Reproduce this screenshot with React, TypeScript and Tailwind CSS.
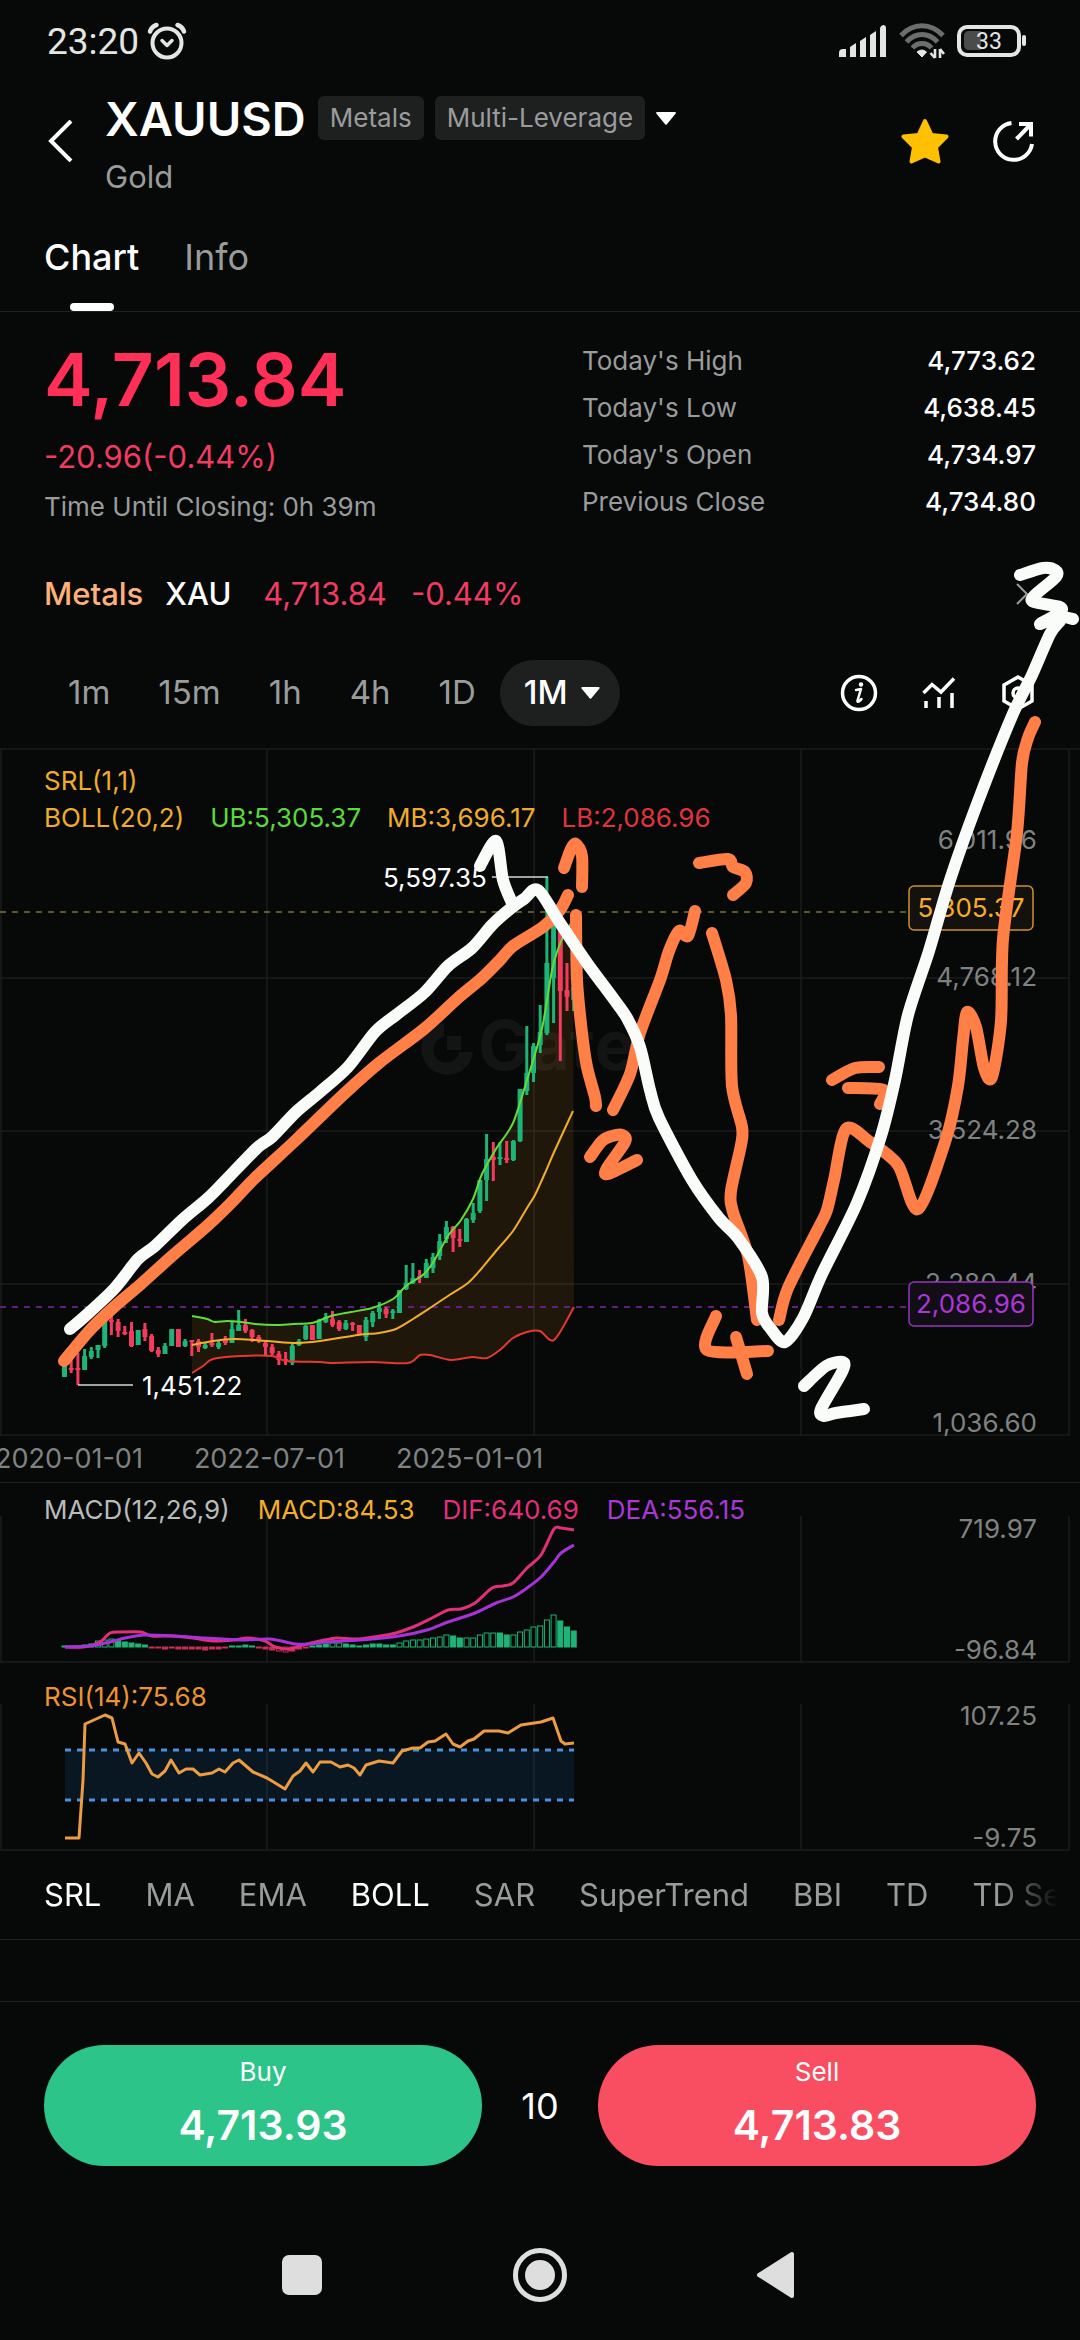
import type { ReactNode } from "react";
import clsx from "clsx";

const stats = [
  { label: "Today's High", value: "4,773.62" },
  { label: "Today's Low", value: "4,638.45" },
  { label: "Today's Open", value: "4,734.97" },
  { label: "Previous Close", value: "4,734.80" },
];

const timeframes = ["1m", "15m", "1h", "4h", "1D"];
const indicators = ["SRL", "MA", "EMA", "BOLL", "SAR", "SuperTrend", "BBI", "TD", "TD Sequential"];
const activeIndicators = ["SRL", "BOLL"];

const GREEN = "#1fb477";
const RED = "#f23b5d";
const FIRST_X = 64;
const STEP = 6.7;

// [up, high, bodyTop, bodyBottom, low] in chart units, one per month
const candles: [number, number, number, number, number][] = [
  [1, 1362, 1366, 1377, 1377], [0, 1357, 1368, 1370, 1373], [0, 1353, 1368, 1370, 1385], [1, 1349, 1356, 1370, 1370],
  [1, 1347, 1351, 1357, 1359], [1, 1345, 1345, 1350, 1358], [1, 1321, 1321, 1346, 1348], [0, 1313, 1320, 1322, 1335],
  [0, 1319, 1322, 1331, 1337], [0, 1326, 1332, 1334, 1335], [0, 1322, 1331, 1346, 1347], [1, 1330, 1330, 1345, 1345],
  [0, 1323, 1329, 1337, 1341], [0, 1334, 1336, 1351, 1352], [0, 1347, 1350, 1354, 1357], [1, 1343, 1346, 1354, 1354],
  [1, 1329, 1329, 1346, 1346], [0, 1329, 1329, 1347, 1347], [1, 1339, 1341, 1346, 1347], [0, 1340, 1340, 1342, 1356],
  [0, 1339, 1341, 1347, 1352], [1, 1342, 1345, 1348, 1349], [0, 1333, 1343, 1345, 1347], [1, 1341, 1343, 1347, 1349],
  [0, 1336, 1339, 1343, 1345], [1, 1321, 1329, 1343, 1343], [1, 1310, 1325, 1331, 1331], [0, 1319, 1325, 1331, 1333],
  [0, 1329, 1330, 1337, 1342], [0, 1335, 1337, 1340, 1343], [0, 1341, 1343, 1347, 1356], [0, 1344, 1347, 1353, 1355],
  [0, 1351, 1354, 1360, 1365], [0, 1352, 1359, 1361, 1365], [1, 1344, 1346, 1363, 1365], [1, 1339, 1341, 1345, 1346],
  [1, 1325, 1326, 1339, 1340], [0, 1325, 1325, 1340, 1340], [1, 1319, 1321, 1339, 1339], [1, 1313, 1317, 1322, 1323],
  [0, 1311, 1319, 1325, 1327], [0, 1320, 1322, 1329, 1331], [1, 1320, 1323, 1329, 1330], [0, 1322, 1323, 1325, 1331],
  [0, 1325, 1325, 1334, 1334], [1, 1317, 1320, 1337, 1341], [1, 1311, 1313, 1322, 1327], [1, 1302, 1308, 1312, 1319],
  [0, 1307, 1309, 1314, 1318], [1, 1309, 1311, 1313, 1319], [1, 1290, 1290, 1313, 1313], [1, 1265, 1283, 1289, 1290],
  [1, 1263, 1278, 1283, 1284], [0, 1270, 1276, 1278, 1283], [1, 1259, 1263, 1278, 1278], [1, 1253, 1257, 1268, 1273],
  [1, 1234, 1241, 1256, 1260], [1, 1221, 1227, 1239, 1243], [0, 1226, 1227, 1238, 1252], [0, 1229, 1239, 1241, 1247],
  [1, 1218, 1219, 1242, 1242], [1, 1203, 1213, 1220, 1223], [1, 1180, 1180, 1211, 1213], [1, 1134, 1159, 1180, 1201],
  [0, 1142, 1157, 1160, 1181], [1, 1142, 1157, 1159, 1165], [0, 1141, 1158, 1160, 1163], [1, 1140, 1141, 1160, 1161],
  [1, 1089, 1089, 1141, 1142], [1, 1026, 1073, 1091, 1095], [1, 1043, 1046, 1073, 1082], [1, 1005, 1032, 1045, 1053],
  [1, 877, 963, 1033, 1035], [1, 920, 927, 978, 1023], [0, 910, 923, 991, 1061], [0, 963, 990, 997, 1011],
  [1, 985, 987, 1000, 1011],
];

const upperBand =
  "192,1316 207,1319 215,1322 227,1321 241,1322 255,1324 275,1325 293,1324 312,1323 331,1316 351,1312 372,1308 393,1299 406,1286 424,1274 434,1261 448,1236 461,1220 473,1199 482,1174 496,1149 513,1123 527,1080 541,1033 547,1000 552,970 557,952 563,937 573,920";
const middleBand =
  "192,1345 213,1341 234,1339 255,1340 293,1343 320,1341 358,1335 379,1333 396,1329 413,1319 430,1308 448,1296 468,1283 482,1268 496,1251 513,1231 527,1208 535,1195 545,1173 555,1150 573,1111";
const lowerBand =
  "192,1373 203,1366 213,1359 241,1356 272,1356 286,1361 320,1362 331,1363 372,1362 408,1363 420,1355 430,1355 451,1360 472,1357 487,1358 501,1349 513,1338 527,1332 540,1331 554,1340 574,1307";

// histogram heights; negative hangs under the zero line
const histogram = [
  1, 1, 1, 2, 3, 6, 7, 8, 7, 5, 4, 3, 2, -1, -1, -2, -1, -2, -2, -2, -2, -3, -2, -2, -1, 1, 1, 2, 1, -1, -2, -3, -4, -5,
  -4, -2, -1, 1, 2, 3, 4, 4, 3, 2, 1, 2, 3, 3, 2, 2, 4, 6, 7, 7, 8, 9, 10, 12, 11, 9, 9, 9, 12, 14, 14, 14, 12, 12, 15,
  17, 20, 21, 27, 32, 26, 20, 16,
];

const dif =
  "65,1647 83,1647 100,1642 110,1633 121,1632 141,1632 152,1636 172,1636 193,1638 213,1641 234,1640 248,1638 265,1641 275,1647 289,1649 303,1645 320,1641 337,1638 358,1639 386,1635 396,1633 413,1627 430,1619 448,1610 461,1609 475,1603 492,1588 503,1586 513,1583 527,1568 541,1555 554,1529 561,1528 574,1530";
const dea =
  "65,1647 90,1646 110,1642 125,1638 145,1635 175,1636 205,1638 240,1640 270,1639 295,1644 310,1644 325,1642 360,1640 399,1636 427,1630 448,1622 475,1613 496,1603 513,1597 527,1588 541,1577 554,1562 561,1553 574,1545";
const rsi =
  "65,1838 79,1838 83,1780 85,1724 105,1715 112,1718 118,1742 125,1744 132,1763 139,1753 146,1763 152,1774 158,1777 165,1771 171,1760 179,1773 186,1769 193,1769 200,1775 212,1773 219,1769 225,1772 233,1763 239,1760 253,1772 267,1778 285,1789 293,1776 300,1771 306,1763 313,1772 320,1762 331,1762 340,1767 348,1765 354,1768 360,1775 366,1765 379,1761 393,1763 402,1751 413,1748 420,1748 428,1742 435,1741 446,1734 453,1744 460,1747 468,1741 474,1739 484,1731 499,1731 508,1733 521,1725 541,1722 553,1718 561,1741 565,1744 574,1743";

const orangeStrokes = [
  "64,1361 90,1330 114,1307 141,1284 172,1256 207,1226 230,1204 255,1178 296,1140 344,1094 379,1063 424,1029 458,998 482,978 500,960 513,946 543,927 560,910 568,895",
  "564,868 571,849 576,844 582,856 582,887",
  "576,915 577,980 582,1033 587,1067 595,1097 596,1106",
  "590,1157 602,1141 612,1136 622,1135 625,1142 607,1168 608,1174 637,1160",
  "613,1110 630,1074 640,1033 660,980 669,951 679,931 688,936 695,911",
  "699,863 728,859 733,867 745,872 746,883 733,895",
  "712,933 726,980 731,1015 732,1086 742,1127 741,1145 731,1191 733,1212 748,1256 757,1320",
  "716,1316 707,1350 768,1351",
  "736,1337 747,1374",
  "779,1320 788,1288 819,1227 827,1210 834,1180 846,1129 870,1142 898,1165 918,1209 946,1139 958,1086 963,1040 967,1012 976,1027 984,1068 992,1077 1001,1021 1003,939 1017,833 1022,763 1028,738 1035,722",
  "832,1080 855,1068 879,1067",
  "848,1088 884,1090 880,1104",
];
const whiteStrokes = [
  "70,1329 83,1318 114,1289 138,1259 155,1246 182,1220 207,1199 224,1182 257,1148 272,1137 296,1112 320,1092 348,1067 375,1032 396,1015 424,993 448,966 472,948 492,925 510,909 524,899 538,890 560,923 587,963 613,998 627,1018 640,1047 650,1090 659,1118 692,1180 719,1218 738,1238 762,1277 762,1313 771,1329 785,1342 803,1318 822,1274 857,1203 881,1136 895,1080 908,1015 929,951 950,880 977,804 1012,716 1032,675 1050,634 1060,621",
  "480,866 496,841 503,880 512,903",
  "1020,575 1043,568 1055,570 1056,577 1034,596 1034,602 1060,607 1059,613 1040,624 1060,617 1073,619",
  "804,1386 826,1366 843,1362 842,1372 821,1409 824,1416 836,1413 864,1409",
];

const columns = [1, 267, 534, 801, 1069];

// curve that passes through every point of "x,y x,y ..."
function smooth(points: string) {
  const p = points.split(" ").map((s) => s.split(",").map(Number));
  let d = `M${p[0][0]} ${p[0][1]}`;
  for (let i = 0; i < p.length - 1; i++) {
    const [a, b, c, e] = [p[i - 1] ?? p[i], p[i], p[i + 1], p[i + 2] ?? p[i + 1]];
    d += `C${b[0] + (c[0] - a[0]) / 7} ${b[1] + (c[1] - a[1]) / 7} ${c[0] - (e[0] - b[0]) / 7} ${c[1] - (e[1] - b[1]) / 7} ${c[0]} ${c[1]}`;
  }
  return d;
}

function Caret({ className }: { className?: string }) {
  return (
    <svg viewBox="0 0 20 13" className={className} fill="currentColor">
      <path d="M1 0h18a1 1 0 0 1 .7 1.6l-9 10.8a1 1 0 0 1-1.4 0l-9-10.8A1 1 0 0 1 1 0z" />
    </svg>
  );
}

function Tag({ children }: { children: ReactNode }) {
  return <span className="rounded-md bg-[#1e2020] px-3 text-[26px] leading-[44px] text-[#9a9c9c]">{children}</span>;
}

function StatusBar() {
  return (
    <div className="flex h-[82px] items-center justify-between pl-[47px] pr-[53px] text-[#e4e6e4]">
      <div className="flex items-center gap-2">
        <span className="font-['Roboto',sans-serif] text-[37px] leading-none">23:20</span>
        <svg viewBox="0 0 40 38" className="h-[38px] w-10" fill="none" stroke="currentColor" strokeLinecap="round">
          <circle cx="20" cy="21" r="14.500" strokeWidth="4" />
          <path d="M15 18.500l5 5 5-5" strokeWidth="3.500" strokeLinejoin="round" />
          <path d="M3 9.500C4 6.500 6.500 4 9.500 3M37 9.500C36 6.500 33.500 4 30.500 3" strokeWidth="4.500" />
        </svg>
      </div>
      <div className="flex items-center gap-3">
        <svg viewBox="0 0 48 32" className="h-8 w-12" fill="currentColor">
          <path d="M0 32v-4a4 4 0 0 1 4-4h3v8zM11 32V22l6-4v14zM21 32V16l6-4v20zM31 32V10l6-4v26zM41 32V4q0-3 3-4 3 0 3 3v29z" />
        </svg>
        <svg viewBox="0 0 46 36" className="h-9 w-[46px]" fill="none" stroke="#6c6e6d" strokeWidth="5">
          <path d="M2 12.500C14-.5 32-.5 44 12.500M7.500 19C16.500 9 29.500 9 38.500 19M13.500 25c5-6 14-6 19 0" />
          <path d="M18 29q5-4 9.500 0L23 34z" fill="#e4e6e4" stroke="#e4e6e4" strokeWidth="1" />
          <path d="M36 26v9M41 26v9M31.500 30l4.500 5M45 31l-4-5" stroke="#e4e6e4" strokeWidth="2.600" />
        </svg>
        <svg viewBox="0 0 70 32" className="h-8 w-[70px]" aria-label="Battery 33%">
          <rect x="2" y="2" width="60" height="28" rx="8" fill="none" stroke="currentColor" strokeWidth="4" />
          <path d="M7 11q0-5 5-5h12v19H12q-5 0-5-5z" fill="#4a4c4b" />
          <rect x="65" y="10" width="4" height="11" rx="2" fill="currentColor" />
          <text x="32" y="24" textAnchor="middle" fontFamily="Roboto, sans-serif" fontSize="23" fill="currentColor">33</text>
        </svg>
      </div>
    </div>
  );
}

function Header() {
  return (
    <header className="flex items-start pl-[47px] pr-11 pt-[14px]">
      <button aria-label="Back" className="flex h-[90px] w-[58px] items-center">
        <svg viewBox="0 0 26 42" className="h-[42px] w-[26px]" fill="none" stroke="#fff" strokeWidth="4">
          <path d="M24 1L4 21l20 20" />
        </svg>
      </button>
      <div className="flex-1">
        <div className="flex h-11 items-center">
          <h1 className="text-[47px] font-semibold leading-none">XAUUSD</h1>
          <div className="ml-3 flex items-center gap-[11px]">
            <Tag>Metals</Tag>
            <Tag>Multi-Leverage</Tag>
            <button aria-label="Leverage options">
              <Caret className="h-[13px] w-5" />
            </button>
          </div>
        </div>
        <p className="mt-[18px] text-[31px] leading-[38px] text-[#9a9c9c]">Gold</p>
      </div>
      <div className="flex h-[90px] items-center gap-[43px]">
        <button aria-label="Favorite">
          <svg viewBox="0 0 48 46" className="h-[46px] w-12" fill="#ffc000" stroke="#ffc000" strokeWidth="4" strokeLinejoin="round">
            <path d="M24 3l6.500 14 15 1.500L35 29l2.500 14.500L24 37.500 10.500 43.500 13 29 2.500 18.500l15-1.500z" />
          </svg>
        </button>
        <button aria-label="Share">
          <svg viewBox="0 0 44 44" className="size-[44px]" fill="none" stroke="#fff" strokeWidth="4">
            <path d="M19.500 4A18.500 18.500 0 1 0 40 25" />
            <path d="M24.500 20L39 5M27 5h12v12.500" />
          </svg>
        </button>
      </div>
    </header>
  );
}

function PageTabs() {
  return (
    <nav className="flex gap-[45px] border-b border-[#1f2121] px-11 pt-[37px] text-4xl/[48px]">
      <button className="flex flex-col items-center font-medium">
        Chart
        <span className="mt-[22px] h-2 w-11 rounded bg-white" />
      </button>
      <button className="self-start text-[#9a9c9c]">Info</button>
    </nav>
  );
}

function Quote() {
  return (
    <section className="flex justify-between px-11 pt-[25px]">
      <div>
        <p className="text-[73px] font-semibold leading-[86px] text-[#ff2f58]">4,713.84</p>
        <p className="mt-3 text-[31px] leading-[44px] text-[#f23b62]">-20.96(-0.44%)</p>
        <p className="mt-[10px] text-[26px] leading-9 text-[#9a9c9c]">Time Until Closing: 0h 39m</p>
      </div>
      <dl className="w-[46%] max-w-[454px] text-[26px] leading-[47px]">
        {stats.map((s) => (
          <div key={s.label} className="flex justify-between">
            <dt className="text-[#9a9c9c]">{s.label}</dt>
            <dd className="font-medium">{s.value}</dd>
          </div>
        ))}
      </dl>
    </section>
  );
}

function RelatedMarket() {
  return (
    <a href="#xau" className="mx-11 mt-[46px] flex items-center text-[31px] leading-[46px]">
      <span className="font-medium text-[#ffb078]">Metals</span>
      <span className="ml-[22px] font-medium">XAU</span>
      <span className="ml-8 text-[#f23b62]">4,713.84</span>
      <span className="ml-6 text-[#f23b62]">-0.44%</span>
      <svg viewBox="0 0 20 22" className="ml-auto h-[22px] w-5" fill="none" stroke="#9a9c9c" strokeWidth="2">
        <path d="M1 1l10 10L1 21" />
      </svg>
    </a>
  );
}

function Timeframes() {
  return (
    <div className="mt-[43px] flex h-[66px] items-center justify-between px-11">
      <div className="flex h-full items-center text-[33px]">
        {timeframes.map((t) => (
          <button key={t} className="px-6 text-[#9a9c9c]">{t}</button>
        ))}
        <button className="flex h-full items-center gap-[13px] rounded-full bg-[#1e2020] pl-6 pr-5 font-medium">
          1M
          <Caret className="h-3 w-[19px]" />
        </button>
      </div>
      <div className="flex items-center gap-[43px]">
        <button aria-label="About this chart">
          <svg viewBox="0 0 38 38" className="size-[38px]" fill="none" stroke="#fff" strokeWidth="3.500">
            <circle cx="19" cy="19" r="16.500" />
            <path d="M16 16l5-1-3.500 11.500q-.4 2 1.500 1l2.500-2.500" strokeWidth="2.500" strokeLinejoin="round" strokeLinecap="round" />
            <circle cx="21" cy="10.500" r="2.200" fill="#fff" stroke="none" />
          </svg>
        </button>
        <button aria-label="Indicators">
          <svg viewBox="0 0 36 36" className="size-9" fill="none" stroke="#fff" strokeWidth="3.500">
            <path d="M2.500 18L11 9.500l9 7.500L33 3.500" />
            <path d="M5 33v-7M18 33V22M31 33V18" />
          </svg>
        </button>
        <button aria-label="Chart settings">
          <svg viewBox="0 0 36 38" className="h-[38px] w-9" fill="none" stroke="#fff" strokeWidth="3.500">
            <path d="M18 3l14 8v16l-14 8-14-8V11z" />
            <circle cx="18" cy="19" r="5" />
          </svg>
        </button>
      </div>
    </div>
  );
}

function PriceChart() {
  return (
    <section className="relative mt-[22px]">
      <svg viewBox="0 748 1080 688" className="block w-full" fontSize="26">
        <g stroke="#1b1d1d" strokeWidth="1.500">
          <path d="M0 749H1080M0 978H1069M0 1131H1069M0 1284H1069M0 1435H1069" />
          {columns.map((x) => <path key={x} d={`M${x} 749V1436`} />)}
        </g>
        <g fill="#131515">
          <path d="M444 1023v14a13 13 0 1 0 15 15h14a26 26 0 1 1-29-29z" />
          <path d="M447 1036h14v14h-14z" />
          <text x="478" y="1070" fontSize="69" fontWeight="700">Gate</text>
        </g>
        <path d={`${smooth(upperBand)}L${lowerBand.split(" ").reverse().join("L")}Z`} fill="#ff9a1f" fillOpacity="0.1" />
        <path d="M0 912H908" stroke="#83702f" strokeWidth="1.500" strokeDasharray="6 6" />
        <path d="M0 1307H908" stroke="#641d80" strokeWidth="2" strokeDasharray="6 6" />
        {candles.map(([up, high, top, bottom, low], i) => {
          const x = FIRST_X + i * STEP;
          return (
            <g key={i} fill={up ? GREEN : RED}>
              <rect x={x - 1} y={high} width="3" height={low - high} />
              <rect x={x - 2} y={top} width="5" height={bottom - top} rx="0.500" />
            </g>
          );
        })}
        <g fill="none" strokeWidth="2">
          <path d={smooth(lowerBand)} stroke="#e5382f" />
          <path d={smooth(middleBand)} stroke="#f5ad28" />
          <path d={smooth(upperBand)} stroke="#62dc3a" />
          <path d="M492 877H548M78 1385H133" stroke="#d4d6d6" strokeWidth="1.500" />
        </g>
        <text x="383" y="887" fill="#fff">5,597.35</text>
        <text x="142" y="1395" fill="#fff">1,451.22</text>
        <g fill="#808282" textAnchor="end">
          <text x="1037" y="849">6,011.96</text>
          <text x="1037" y="986">4,768.12</text>
          <text x="1037" y="1139">3,524.28</text>
          <text x="1037" y="1292">2,280.44</text>
          <text x="1037" y="1432">1,036.60</text>
        </g>
        <g strokeWidth="1.500" textAnchor="middle">
          <rect x="909" y="886" width="124" height="44" rx="5" fill="#14120f" stroke="#d09030" />
          <text x="971" y="917" fill="#f5ad28">5,305.37</text>
          <rect x="909" y="1282" width="124" height="44" rx="5" fill="#120e15" stroke="#9a34c0" />
          <text x="971" y="1313" fill="#ac36d8">2,086.96</text>
        </g>
      </svg>
      <div className="absolute left-11 top-[14px] text-[26px] leading-[37px]">
        <p className="text-[#f0ab2c]">SRL(1,1)</p>
        <p className="flex gap-[26px]">
          <span className="text-[#f0ab2c]">BOLL(20,2)</span>
          <span className="text-[#5bd93c]">UB:5,305.37</span>
          <span className="text-[#f0ab2c]">MB:3,696.17</span>
          <span className="text-[#e0343c]">LB:2,086.96</span>
        </p>
      </div>
      <div className="flex h-[47px] items-center gap-[51px] overflow-hidden border-b border-[#1f2121] text-[27px] text-[#808282]">
        <span className="-ml-[5px]">2020-01-01</span>
        <span>2022-07-01</span>
        <span>2025-01-01</span>
      </div>
    </section>
  );
}

function MacdChart() {
  return (
    <section className="relative">
      <svg viewBox="0 1483 1080 180" className="block w-full" fontSize="26">
        <g stroke="#1b1d1d" strokeWidth="1.500">
          <path d="M0 1662H1069" />
          {columns.map((x) => <path key={x} d={`M${x} 1516V1662`} />)}
        </g>
        {histogram.map((h, i) => {
          const size = Math.abs(h);
          const rising = i > 0 && size >= Math.abs(histogram[i - 1]) && i !== 65;
          const color = h < 0 ? "#c92f55" : GREEN;
          return (
            <rect
              key={i}
              x={FIRST_X - 2 + i * STEP}
              y={h < 0 ? 1647 : 1647 - size}
              width="5"
              height={size}
              fill={rising && size > 3 ? "#060808" : color}
              stroke={color}
            />
          );
        })}
        <path d={smooth(dif)} fill="none" stroke="#e22f7a" strokeWidth="3" />
        <path d={smooth(dea)} fill="none" stroke="#a832d8" strokeWidth="3" />
        <g fill="#808282" textAnchor="end">
          <text x="1037" y="1538">719.97</text>
          <text x="1037" y="1659">-96.84</text>
        </g>
      </svg>
      <p className="absolute left-11 top-[9px] flex gap-[28px] text-[26px] leading-9">
        <span className="text-[#b9bbbb]">MACD(12,26,9)</span>
        <span className="text-[#f5ad28]">MACD:84.53</span>
        <span className="text-[#e22f7a]">DIF:640.69</span>
        <span className="text-[#ac36d8]">DEA:556.15</span>
      </p>
    </section>
  );
}

function RsiChart() {
  return (
    <section className="relative">
      <svg viewBox="0 1663 1080 188" className="block w-full" fontSize="26">
        <g stroke="#1b1d1d" strokeWidth="1.500">
          <path d="M0 1850H1069" />
          {columns.map((x) => <path key={x} d={`M${x} 1704V1850`} />)}
        </g>
        <rect x="65" y="1750" width="509" height="50" fill="#1a78d0" fillOpacity="0.130" />
        <path d="M65 1750H574M65 1800H574" stroke="#4a92dc" strokeWidth="3" strokeDasharray="6 6" />
        <polyline points={rsi} fill="none" stroke="#ee9c42" strokeWidth="3" strokeLinejoin="round" />
        <g fill="#808282" textAnchor="end">
          <text x="1037" y="1725">107.25</text>
          <text x="1037" y="1847">-9.75</text>
        </g>
      </svg>
      <p className="absolute left-11 top-4 text-[26px] leading-9 text-[#ee9330]">RSI(14):75.68</p>
    </section>
  );
}

function IndicatorTabs() {
  return (
    <div className="border-b border-[#1f2121] pl-11 pr-[22px]">
      <div className="flex h-[88px] items-center gap-11 overflow-hidden whitespace-nowrap text-[31px] [mask-image:linear-gradient(to_right,black_94%,transparent)]">
        {indicators.map((name) => (
          <button key={name} className={clsx("shrink-0", activeIndicators.includes(name) ? "text-white" : "text-[#9a9c9c]")}>
            {name}
          </button>
        ))}
      </div>
    </div>
  );
}

function TradeButton({ label, price, className }: { label: string; price: string; className: string }) {
  return (
    <button className={clsx("flex h-[121px] flex-1 flex-col items-center rounded-full pt-[9px]", className)}>
      <span className="text-[26px] leading-9">{label}</span>
      <span className="mt-[11px] text-[41px] font-semibold leading-[48px]">{price}</span>
    </button>
  );
}

function TradeBar() {
  return (
    <div className="mt-[61px] flex items-center border-t border-[#1f2121] px-11 pt-[43px]">
      <TradeButton label="Buy" price="4,713.93" className="bg-[#2cc488]" />
      <input aria-label="Quantity" defaultValue="10" className="w-[116px] bg-transparent text-center text-4xl outline-none" />
      <TradeButton label="Sell" price="4,713.83" className="bg-[#f94d61]" />
    </div>
  );
}

function SystemNav() {
  return (
    <nav className="flex justify-center gap-[183px] pb-[38px] pt-[82px] text-[#dedede]">
      <button aria-label="Recents">
        <svg viewBox="0 0 54 54" className="size-[54px]" fill="currentColor">
          <rect x="6" y="7" width="40" height="40" rx="7" />
        </svg>
      </button>
      <button aria-label="Home">
        <svg viewBox="0 0 54 54" className="size-[54px]">
          <circle cx="27" cy="27" r="24.500" fill="none" stroke="currentColor" strokeWidth="5" />
          <circle cx="27" cy="27" r="15" fill="currentColor" />
        </svg>
      </button>
      <button aria-label="Back to previous app">
        <svg viewBox="0 0 54 54" className="size-[54px]" fill="currentColor" stroke="currentColor" strokeWidth="4" strokeLinejoin="round">
          <path d="M9 27L42 6v42z" />
        </svg>
      </button>
    </nav>
  );
}

// hand-drawn wave count, lies over the whole screen
function Annotations() {
  return (
    <svg
      viewBox="0 0 1080 1440"
      className="pointer-events-none absolute inset-x-0 top-0 w-full"
      fill="none"
      strokeWidth="12"
      strokeLinecap="round"
      strokeLinejoin="round"
    >
      {orangeStrokes.map((p) => <path key={p} d={smooth(p)} stroke="#ff7f47" />)}
      {whiteStrokes.map((p) => <path key={p} d={smooth(p)} stroke="#fafcfa" />)}
    </svg>
  );
}

export default function App() {
  return (
    <div className="relative min-h-screen overflow-hidden bg-[#060908] font-['Inter',sans-serif] text-white">
      <StatusBar />
      <Header />
      <PageTabs />
      <main>
        <Quote />
        <RelatedMarket />
        <Timeframes />
        <PriceChart />
        <MacdChart />
        <RsiChart />
        <IndicatorTabs />
        <TradeBar />
      </main>
      <SystemNav />
      <Annotations />
    </div>
  );
}
